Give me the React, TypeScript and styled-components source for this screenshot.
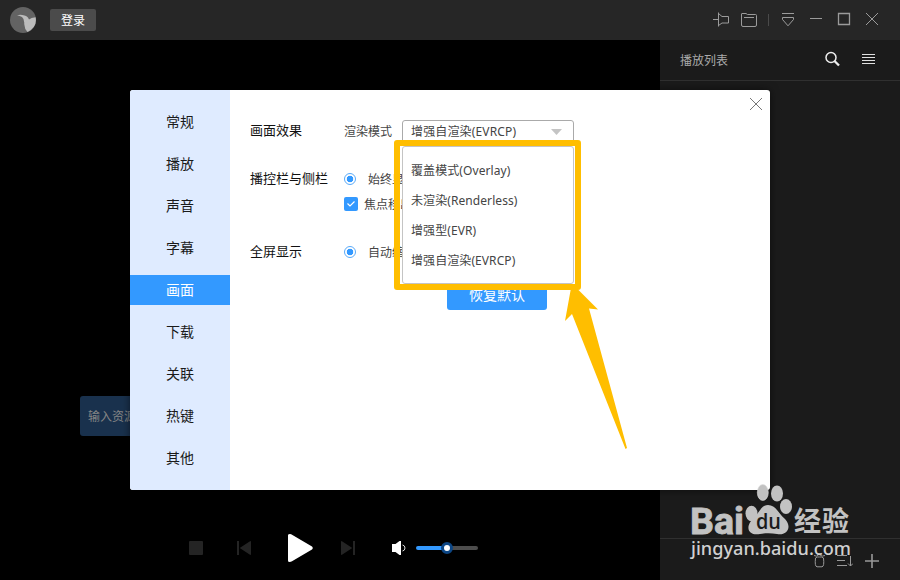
import React from 'react';
import styled, { createGlobalStyle, css } from 'styled-components';

const GlobalStyle = createGlobalStyle`
  * { box-sizing: border-box; }
  body { margin: 0; overflow: hidden; background: #000; }
  button { font: inherit; border: 0; padding: 0; background: none; }
`;

const Window = styled.div`
  position: relative;
  width: 900px;
  height: 580px;
  display: grid;
  grid-template-rows: 40px 1fr;
  overflow: hidden;
  background: #000;
  font-family: 'Noto Sans', 'Noto Sans CJK SC', sans-serif;
  font-size: 12px;
`;

const TitleBar = styled.header`
  display: flex;
  align-items: center;
  justify-content: space-between;
  padding: 0 20px 0 10px;
  background: #262626;
`;

const Account = styled.div`
  display: flex;
  align-items: center;
  gap: 14px;
`;

const LoginButton = styled.button`
  width: 46px;
  height: 22px;
  padding-top: 1px;
  border-radius: 2px;
  background: #4b4b4b;
  color: #fff;
  line-height: 21px;
`;

const WindowTools = styled.div`
  display: flex;
  align-items: center;
  color: #9b9b9b;
`;

const ToolButton = styled.button`
  width: 28px;
  height: 28px;
  display: grid;
  place-items: center;
  padding-bottom: 1px;
  color: inherit;
  &:last-child { width: 16px; margin-left: 6px; }
`;

const Divider = styled.i`
  width: 1px;
  height: 12px;
  margin: 0 5px;
  background: #4a4a4a;
`;

const Workspace = styled.div`
  display: grid;
  grid-template-columns: 660px 240px;
`;

const Stage = styled.main`
  display: flex;
  flex-direction: column;
  justify-content: flex-end;
`;

const ResourceInput = styled.div`
  width: 200px;
  height: 40px;
  margin: 0 0 80px 80px;
  padding-left: 8px;
  border-radius: 3px;
  background: #19314d;
  color: #858585;
  line-height: 41px;
`;

const Controls = styled.div`
  height: 64px;
  display: flex;
  align-items: center;
  padding-left: 189px;
`;

const ControlIcon = styled.svg<{ $gap: number }>`
  flex: none;
  margin-right: ${(p) => p.$gap}px;
`;

const Volume = styled.div`
  width: 62px;
  height: 4px;
  display: flex;
  align-items: center;
  border-radius: 2px;
  background: linear-gradient(90deg, #3399ff 50%, #4d4d4d 50%);
`;

const Thumb = styled.i`
  width: 12px;
  height: 12px;
  margin-left: 25px;
  border: 3px solid #0c4685;
  border-radius: 50%;
  background: #fff;
`;

const Playlist = styled.aside`
  display: flex;
  flex-direction: column;
  background: #1b1b1b;
`;

const PlaylistHeader = styled.div`
  height: 41px;
  display: flex;
  align-items: center;
  padding: 0 25px 2px 20px;
  border-bottom: 1px solid #303030;
  color: #aaa;
  svg { margin-left: 22px; }
`;

const PlaylistTitle = styled.span`
  flex: 1;
  padding-top: 1px;
`;

const PlaylistBody = styled.div`
  flex: 1;
`;

const PlaylistFooter = styled.div`
  height: 42px;
  display: flex;
  justify-content: flex-end;
  align-items: center;
  gap: 11px;
  padding: 2px 20px 0 0;
  border-top: 1px solid #303030;
  color: #999;
`;

const Dialog = styled.section`
  position: absolute;
  left: 130px;
  top: 90px;
  width: 640px;
  height: 400px;
  display: grid;
  grid-template-columns: 100px 1fr;
  border-radius: 3px;
  overflow: hidden;
  background: #fff;
  box-shadow: 0 0 8px rgba(0, 0, 0, 0.55);
`;

const Nav = styled.nav`
  display: flex;
  flex-direction: column;
  gap: 12px;
  padding-top: 17px;
  background: #dfebff;
`;

const NavItem = styled.button<{ $active: boolean }>`
  height: 30px;
  padding-bottom: 0;
  font-size: 14px;
  line-height: 28px;
  color: #1a1a1a;
  ${(p) => p.$active && css`
    background: #3399ff;
    color: #fff;
  `}
`;

const Settings = styled.div`
  position: relative;
  padding: 30px 20px 0;
  color: #444;
`;

const CloseButton = styled.button`
  position: absolute;
  top: 7px;
  right: 7px;
  width: 14px;
  height: 14px;
  svg { display: block; }
`;

const SettingRow = styled.div<{ $gap: number }>`
  display: grid;
  grid-template-columns: 94px 1fr;
  margin-bottom: ${(p) => p.$gap}px;
`;

const SettingLabel = styled.div`
  font-size: 13px;
  line-height: 21px;
  color: #111;
`;

const Field = styled.div`
  display: flex;
  gap: 10px;
  line-height: 23px;
  white-space: nowrap;
`;

const Options = styled.div`
  display: grid;
  grid-auto-rows: 25px;
`;

const Option = styled.label<{ $gap: number }>`
  display: flex;
  align-items: center;
  gap: ${(p) => p.$gap}px;
  height: 22px;
  line-height: 24px;
`;

const OptionText = styled.span`
  padding-top: 2px;
`;

const Radio = styled.i`
  width: 12px;
  height: 12px;
  border: 1px solid #5aaaf8;
  border-radius: 50%;
  background: radial-gradient(circle, #3399ff 3px, #fff 3.6px);
`;

const CheckBox = styled.i`
  width: 14px;
  height: 14px;
  display: grid;
  place-items: center;
  border-radius: 2px;
  background: #3399ff;
`;

const SelectBox = styled.div`
  width: 172px;
  height: 24px;
  display: flex;
  align-items: center;
  justify-content: space-between;
  padding: 0 11px 0 8px;
  border: 1px solid #aaa;
  border-radius: 3px;
  line-height: 20px;
  letter-spacing: 0.15px;
`;

const Menu = styled.ul`
  position: absolute;
  left: 172px;
  top: 56px;
  width: 172px;
  height: 138px;
  margin: 0;
  padding: 9px 0 0 8px;
  border: 1px solid #c4c4c4;
  border-radius: 3px;
  background: #fff;
  list-style: none;
  letter-spacing: 0.08px;
`;

const MenuItem = styled.li`
  height: 30px;
  line-height: 30px;
`;

const RestoreButton = styled.button`
  display: block;
  width: 100px;
  height: 30px;
  margin-left: 197px;
  border-radius: 3px;
  background: #3399ff;
  color: #fff;
  font-size: 14px;
  line-height: 28px;
`;

const Highlight = styled.div`
  position: absolute;
  left: 394px;
  top: 140px;
  width: 187px;
  height: 150px;
  border: 6px solid #ffbe00;
  border-radius: 3px;
`;

const Arrow = styled.svg`
  position: absolute;
  left: 560px;
  top: 284px;
`;

const Watermark = styled.svg`
  position: absolute;
  left: 680px;
  top: 480px;
`;

const navItems = ['常规', '播放', '声音', '字幕', '画面', '下载', '关联', '热键', '其他'];
const renderers = ['覆盖模式(Overlay)', '未渲染(Renderless)', '增强型(EVR)', '增强自渲染(EVRCP)'];

const Line = ({ d, w = 16, h = 16, color = 'currentColor', sw = 1 }:
  { d: string; w?: number; h?: number; color?: string; sw?: number }) => (
  <svg width={w} height={h} viewBox={`0 0 ${w} ${h}`} fill="none" stroke={color} strokeWidth={sw}>
    <path d={d} />
  </svg>
);

const Logo = () => (
  <svg width="26" height="26" viewBox="0 0 26 26">
    <circle cx="13" cy="13" r="13" fill="#636363" />
    <path d="M7 8.2Q11 7.5 13.5 8.2Q17.5 8.5 19 12.5Q21 10.5 25.6 10.3Q27.5 20 17.5 25Q14.5 22 14.2 17Q14.6 12 12 10Q10 8.8 7 8.2Z" fill="#bcbcbc" />
  </svg>
);

export default function App() {
  return (
    <Window>
      <GlobalStyle />
      <TitleBar>
        <Account>
          <Logo />
          <LoginButton>登录</LoginButton>
        </Account>
        <WindowTools>
          <ToolButton><Line d="M0 7.5H5.5M5.5 .5V14.5M5.5 1.5L9 4.5H15.5V11H9L5.5 13.5" /></ToolButton>
          <ToolButton><Line d="M.5 13V2Q.5 1.5 1 1.5H5L6.5 2.5H14.5Q15.500 2.5 15.5 3.5V13Q15.5 14.5 14 14.5H2Q.5 14.5 .5 13ZM3 5.5H13" /></ToolButton>
          <Divider />
          <ToolButton><Line d="M2 1.5H14M2.5 5.5H13.5V7.5L8 13.8L2.5 7.5Z" /></ToolButton>
          <ToolButton><Line d="M2 6.5H14" /></ToolButton>
          <ToolButton><Line d="M2.5 1.5H13.5V12.5H2.5Z" sw={1.3} /></ToolButton>
          <ToolButton><Line d="M2 1L14 13M14 1L2 13" /></ToolButton>
        </WindowTools>
      </TitleBar>
      <Workspace>
        <Stage>
          <ResourceInput>输入资源链接</ResourceInput>
          <Controls>
            <ControlIcon $gap={34} width="14" height="14"><rect width="14" height="14" rx="1" fill="#242424" /></ControlIcon>
            <ControlIcon $gap={37} width="14" height="14" fill="#242424"><path d="M0 0H2V14H0ZM13.4 0Q14 0 14 .8V13.2Q14 14 13.4 14L2.7 7Z" /></ControlIcon>
            <ControlIcon $gap={28} width="25" height="28" fill="#fff"><path d="M0 1.2Q0 0 2 0Q3.3 .2 4 .8L24 12.5Q25.5 14 24 15.5L4 27.2Q3 28 1.5 28Q0 28 0 26.5Z" /></ControlIcon>
            <ControlIcon $gap={37} width="14" height="14" fill="#242424"><path d="M14 0H12V14H14ZM.6 0Q0 0 0 .8V13.2Q0 14 .6 14L11.3 7Z" /></ControlIcon>
            <ControlIcon $gap={10} width="14" height="14">
              <path d="M0 3H3.5L7.5 0H9V14H7.5L3.5 11H0Z" fill="#fff" />
              <path d="M10.5 4Q13 4.5 13 7Q13 9.5 10.5 10" fill="none" stroke="#ddd" />
            </ControlIcon>
            <Volume><Thumb /></Volume>
          </Controls>
        </Stage>
        <Playlist>
          <PlaylistHeader>
            <PlaylistTitle>播放列表</PlaylistTitle>
            <svg width="16" height="16" fill="none" stroke="#eee">
              <circle cx="7" cy="6.5" r="5" strokeWidth="1.5" />
              <path d="M10.5 10L15 14.5" strokeWidth="2.3" />
            </svg>
            <Line w={13} d="M0 3.5H13M0 6.5H13M0 9.5H13M0 12.5H13" color="#e0e0e0" />
          </PlaylistHeader>
          <PlaylistBody />
          <PlaylistFooter>
            <Line w={13} d="M1 2.5Q4 4 5 2Q6 1 7 2Q9 4 12 2.5M2.5 5Q1.5 13.5 4 13.8H9Q11.5 13.5 10.5 5Q9 3.5 6.5 4Q4 3.5 2.5 5Z" />
            <Line d="M0 2.5H10M0 7.5H8M0 12.5H10M13.5 3V13M11 10.5L13.5 13L16 10.5" />
            <Line d="M8 1V15M1 8H15" sw={1.6} />
          </PlaylistFooter>
        </Playlist>
      </Workspace>

      <Dialog>
        <Nav>
          {navItems.map((item) => <NavItem key={item} $active={item === '画面'}>{item}</NavItem>)}
        </Nav>
        <Settings>
          <CloseButton><Line w={14} h={14} color="#777" d="M1 1L13 13M13 1L1 13" /></CloseButton>
          <SettingRow $gap={24}>
            <SettingLabel>画面效果</SettingLabel>
            <Field>
              渲染模式
              <SelectBox>
                增强自渲染(EVRCP)
                <svg width="11" height="6"><path d="M0 0H11L5.5 6Z" fill="#c4c4c4" /></svg>
              </SelectBox>
            </Field>
          </SettingRow>
          <SettingRow $gap={23}>
            <SettingLabel>播控栏与侧栏</SettingLabel>
            <Options>
              <Option $gap={12}><Radio /><OptionText>始终显示</OptionText></Option>
              <Option $gap={6}>
                <CheckBox><Line w={10} h={8} color="#fff" sw={1.2} d="M1.5 3.5L4 6L8.5 1.5" /></CheckBox>
                <OptionText>焦点移出时隐藏</OptionText>
              </Option>
            </Options>
          </SettingRow>
          <SettingRow $gap={17}>
            <SettingLabel>全屏显示</SettingLabel>
            <Option $gap={12}><Radio /><OptionText>自动缩放</OptionText></Option>
          </SettingRow>
          <RestoreButton>恢复默认</RestoreButton>
          <Menu>
            {renderers.map((name) => <MenuItem key={name}>{name}</MenuItem>)}
          </Menu>
        </Settings>
      </Dialog>

      <Highlight />
      <Arrow width="70" height="168" fill="#ffbe00">
        <path d="M11 4L16.5 4L38 25.5L29 24.5L67 164L65.5 165L12 30L5 37Z" />
      </Arrow>
      <Watermark width="180" height="85" fill="#c2c2c2">
        <text x="10" y="53.5" fontFamily="Roboto" fontSize="36.500" fontWeight="700" textLength="54" lengthAdjust="spacingAndGlyphs" stroke="#c2c2c2" strokeWidth=".8">Bai</text>
        <ellipse cx="71.5" cy="33.5" rx="6" ry="7.8" />
        <ellipse cx="82.8" cy="12.5" rx="5.5" ry="8" stroke="#dedede" strokeWidth=".6" />
        <ellipse cx="97" cy="13.5" rx="6" ry="8" />
        <ellipse cx="106" cy="26.5" rx="6" ry="7.5" />
        <path d="M88 25C96 25 98 33 105 39C113 48 106 56 97 54C91 53 86 53 80 54C70 56 65 49 71 41C79 35 80 25 88 25Z" />
        <text x="76" y="49" fontFamily="Open Sans" fontSize="22" fontWeight="600" textLength="25" lengthAdjust="spacingAndGlyphs" fill="#1b1b1b">du</text>
        <text x="114" y="51" fontFamily="Noto Sans CJK SC" fontSize="27" fontWeight="700" textLength="55">经验</text>
        <text x="11" y="75" fontFamily="Noto Sans" fontSize="18" fontWeight="500" textLength="160" lengthAdjust="spacingAndGlyphs" fill="#d0d0d0">jingyan.baidu.com</text>
      </Watermark>
    </Window>
  );
}
